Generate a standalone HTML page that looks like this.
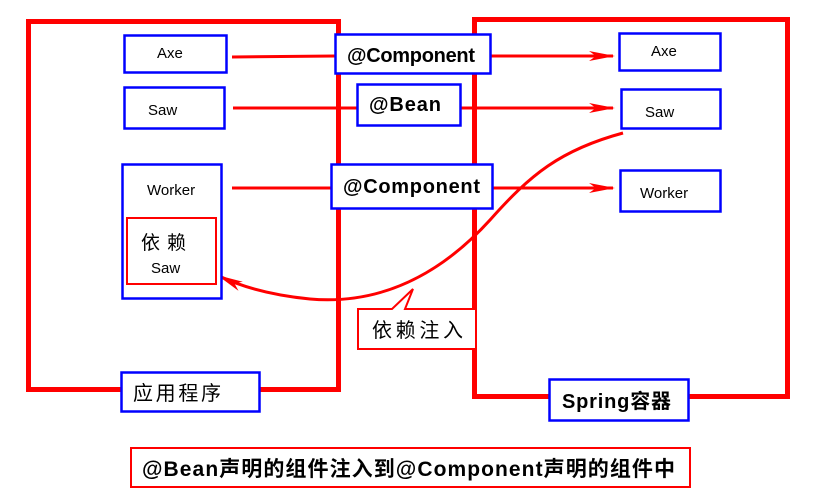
<!DOCTYPE html>
<html><head><meta charset="utf-8"><style>
html,body{margin:0;padding:0;background:#fff;width:814px;height:504px;overflow:hidden}
svg text{font-family:"Liberation Sans","Noto Sans CJK SC",sans-serif;fill:#000}
.b{font-weight:bold}
</style></head><body>
<svg width="814" height="504" viewBox="0 0 814 504" xmlns="http://www.w3.org/2000/svg">
<defs>
<marker id="ah" markerWidth="26" markerHeight="12" refX="24" refY="6" orient="auto" markerUnits="userSpaceOnUse">
<path d="M0,1 L26,6 L0,11 L7,6 Z" fill="#f00"/>
</marker>
</defs>
<g fill="none" stroke="#f00" stroke-width="5">
<rect x="28.5" y="21.5" width="310" height="368"/>
<rect x="474.5" y="19.5" width="313" height="377"/>
</g>
<g stroke="#f00" stroke-width="3" fill="none">
<line x1="232" y1="57" x2="335" y2="56"/>
<line x1="490" y1="56" x2="613" y2="56" marker-end="url(#ah)"/>
<line x1="233" y1="108" x2="357" y2="108"/>
<line x1="460" y1="108" x2="613" y2="108" marker-end="url(#ah)"/>
<line x1="232" y1="188" x2="331" y2="188"/>
<line x1="492" y1="188" x2="613" y2="188" marker-end="url(#ah)"/>
<path d="M623,133 C560,150 530,175 490,220 C440,275 380,305 310,299 C270,295 240,286 219,276" marker-end="url(#ah)"/>
</g>
<g fill="#fff" stroke="#00f" stroke-width="2.5">
<rect x="124.5" y="35.5" width="102" height="37"/>
<rect x="124.5" y="87.5" width="100" height="41"/>
<rect x="122.5" y="164.5" width="99" height="134"/>
<rect x="335.5" y="34.5" width="155" height="39"/>
<rect x="357.5" y="84.5" width="103" height="41"/>
<rect x="331.5" y="164.5" width="161" height="44"/>
<rect x="619.5" y="33.5" width="101" height="37"/>
<rect x="621.5" y="89.5" width="99" height="39"/>
<rect x="620.5" y="170.5" width="100" height="41"/>
<rect x="121.5" y="372.5" width="138" height="39"/>
<rect x="549.5" y="379.5" width="139" height="41"/>
</g>
<g fill="#fff" stroke="#f00" stroke-width="2">
<rect x="127" y="218" width="89" height="66"/>
<rect x="131" y="448" width="559" height="39"/>
<path d="M358,309 L392,309 L413,289 L405,309 L476,309 L476,349 L358,349 Z"/>
</g>
<g font-size="15">
<text x="157" y="58">Axe</text>
<text x="148" y="115">Saw</text>
<text x="147" y="195">Worker</text>
<text x="151" y="273">Saw</text>
<text x="651" y="56">Axe</text>
<text x="645" y="117">Saw</text>
<text x="640" y="198">Worker</text>
</g>
<text x="141" y="249" font-size="19" textLength="45">依 赖</text>
<g class="b" font-size="20">
<text x="347" y="62" textLength="128">@Component</text>
<text x="369" y="111" textLength="72">@Bean</text>
<text x="343" y="193" textLength="137">@Component</text>
<text x="562" y="408" textLength="109">Spring容器</text>
<text x="142" y="476" font-size="21" textLength="533">@Bean声明的组件注入到@Component声明的组件中</text>
</g>
<text x="133" y="400" font-size="20" textLength="88">应用程序</text>
<text x="372" y="337" font-size="20" textLength="91">依赖注入</text>
</svg>
</body></html>
